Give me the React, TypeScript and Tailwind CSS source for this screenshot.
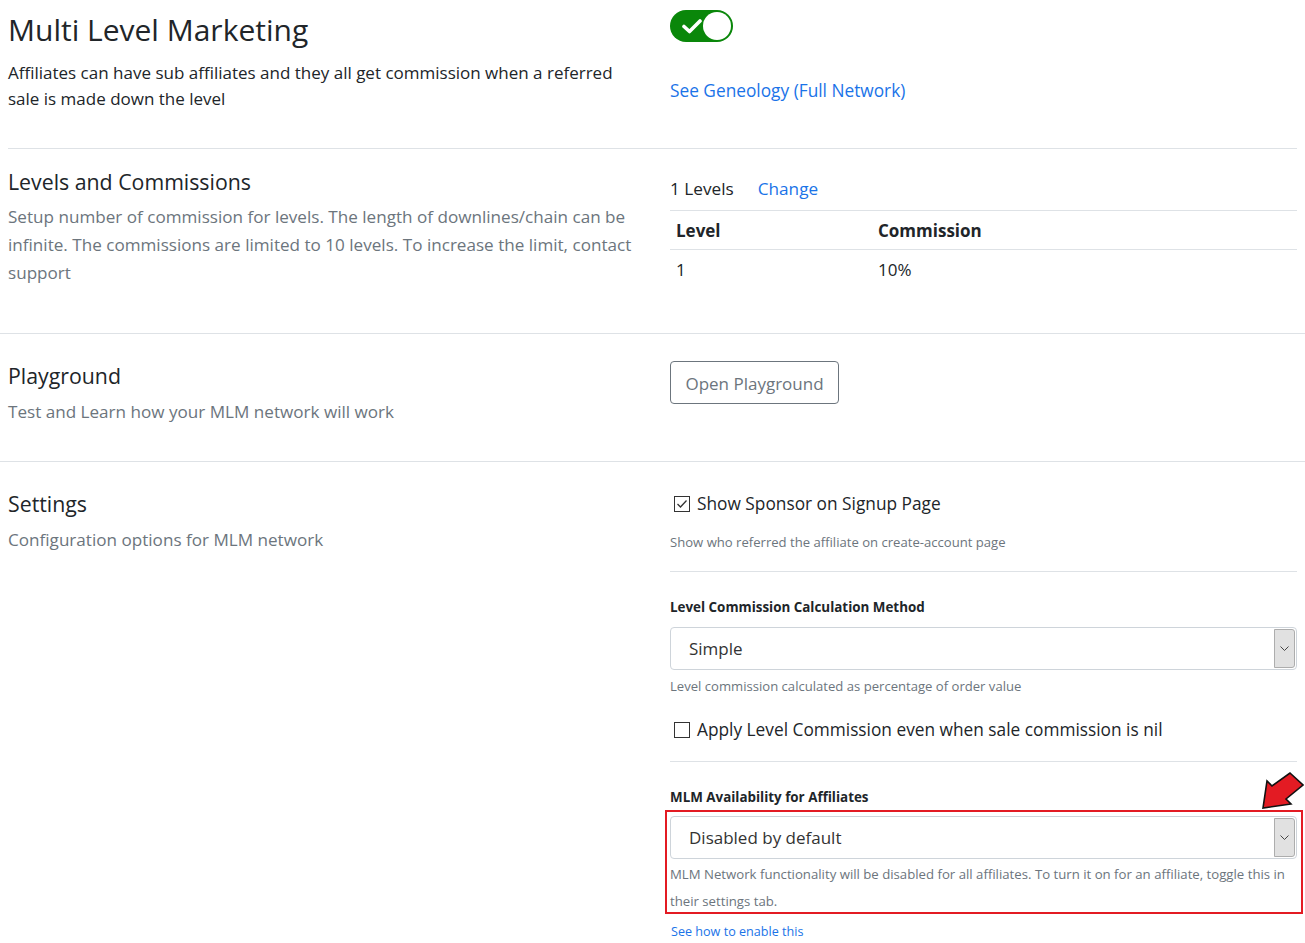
import React from "react";

const Toggle = () => (
    <div className="w-[63px] h-[32px] rounded-full bg-[#0a870a] flex items-center justify-between pl-[12px] pr-[2px]">
        <svg width="20" height="16" viewBox="0 0 20 16">
            <path d="M2 8.5 L7.5 13.5 L18 3" stroke="white" strokeWidth="3.6" fill="none" strokeLinecap="round" strokeLinejoin="round" />
        </svg>
        <div className="w-[28px] h-[28px] rounded-full bg-white" />
    </div>
);

const Checkbox = ({ checked }: { checked?: boolean }) => (
    <div className="w-[16px] h-[16px] border border-[#333] bg-white flex items-center justify-center shrink-0">
        {checked && (
            <svg width="12" height="12" viewBox="0 0 12 12">
                <path d="M1.5 6 L4.5 9 L10.5 2.5" stroke="#333" strokeWidth="1.3" fill="none" />
            </svg>
        )}
    </div>
);

const Select = ({ value }: { value: string }) => (
    <div className="h-[43px] w-full border border-[#ced4da] rounded-[4px] bg-white flex items-center justify-between pl-[18px] pr-[1px]">
        <span className="text-[17px] text-[#333]">{value}</span>
        <div className="w-[21px] h-[39px] bg-[#e1e1e1] border border-[#adadad] rounded-r-[3px] flex items-center justify-center">
            <svg width="9" height="6" viewBox="0 0 9 6">
                <path d="M0.5 0.5 L4.5 4.5 L8.5 0.5" stroke="#444" strokeWidth="1" fill="none" />
            </svg>
        </div>
    </div>
);

export default function App() {
    return (
        <div className="bg-white text-[#212529] font-['Open_Sans',sans-serif] w-[1305px] min-h-[943px] overflow-hidden">
            {/* header */}
            <div className="mx-2 flex border-b border-[#dee2e6] h-[149px] pt-[10px]">
                <div className="w-[662px] pr-[40px]">
                    <h1 className="text-[30px] leading-[40px] font-normal">Multi Level Marketing</h1>
                    <p className="text-[17px] leading-[26px] mt-[10px]">
                        Affiliates can have sub affiliates and they all get commission when a referred sale is made down the level
                    </p>
                </div>
                <div className="flex-1">
                    <Toggle />
                    <a className="block text-[#1a73e8] text-[17.3px] mt-[36px]">See Geneology (Full Network)</a>
                </div>
            </div>

            {/* levels */}
            <div className="border-b border-[#dee2e6] h-[185px]">
                <div className="px-2 flex pt-[19px]">
                    <div className="w-[662px] pr-[14px]">
                        <h3 className="text-[21.3px] leading-[28px]">Levels and Commissions</h3>
                        <p className="text-[17.1px] leading-[28px] text-[#6c757d] mt-[7px]">
                            Setup number of commission for levels. The length of downlines/chain can be infinite. The commissions are limited to 10 levels. To increase the limit, contact support
                        </p>
                    </div>
                    <div className="flex-1 pt-[9px]">
                        <div className="flex items-center gap-[24px] text-[17.2px] h-[24px]">
                            <span>1 Levels</span>
                            <a className="text-[#1a73e8]">Change</a>
                        </div>
                        <table className="w-full mt-[9px] text-[17px] border-collapse">
                            <thead>
                                <tr className="border-t border-b border-[#dee2e6] h-[39px]">
                                    <th className="w-[202px] text-left font-bold pl-[6px] pt-[1px]">Level</th>
                                    <th className="text-left font-bold pl-[6px] pt-[1px]">Commission</th>
                                </tr>
                            </thead>
                            <tbody>
                                <tr className="h-[40px]">
                                    <td className="pl-[6px]">1</td>
                                    <td className="pl-[6px]">10%</td>
                                </tr>
                            </tbody>
                        </table>
                    </div>
                </div>
            </div>

            {/* playground */}
            <div className="border-b border-[#dee2e6] h-[128px]">
                <div className="px-2 flex pt-[27px]">
                    <div className="w-[662px]">
                        <h3 className="text-[21.3px] leading-[28px] mt-[1px]">Playground</h3>
                        <p className="text-[17.1px] leading-[28px] text-[#6c757d] mt-[8px]">Test and Learn how your MLM network will work</p>
                    </div>
                    <div className="flex-1">
                        <button className="h-[43px] w-[169px] border border-[#6c757d] rounded-[4px] text-[17px] text-[#6c757d] bg-white pt-[3px]">
                            Open Playground
                        </button>
                    </div>
                </div>
            </div>

            {/* settings */}
            <div className="px-2 flex pt-[27px]">
                <div className="w-[662px]">
                    <h3 className="text-[21.3px] leading-[28px] mt-[1px]">Settings</h3>
                    <p className="text-[17.1px] leading-[28px] text-[#6c757d] mt-[8px]">Configuration options for MLM network</p>
                </div>
                <div className="flex-1 relative">
                    <div className="border-b border-[#dee2e6] pb-[19px] pt-[1px]">
                        <label className="flex items-center gap-[7px] pl-[4px] h-[28px] text-[17.3px]">
                            <Checkbox checked />
                            <span>Show Sponsor on Signup Page</span>
                        </label>
                        <p className="text-[13.1px] text-[#6c757d] mt-[14px] leading-[20px]">Show who referred the affiliate on create-account page</p>
                    </div>

                    <div className="border-b border-[#dee2e6] pb-[17px] pt-[25px]">
                        <div className="text-[13.4px] font-bold leading-[20px] mb-[10px]">Level Commission Calculation Method</div>
                        <Select value="Simple" />
                        <p className="text-[13.1px] text-[#6c757d] mt-[6px] leading-[20px]">Level commission calculated as percentage of order value</p>
                        <label className="flex items-center gap-[7px] pl-[4px] h-[28px] text-[17.3px] mt-[20px]">
                            <Checkbox />
                            <span>Apply Level Commission even when sale commission is nil</span>
                        </label>
                    </div>

                    <div className="pt-[25px]">
                        <div className="text-[13.4px] font-bold leading-[20px] mb-[3px]">MLM Availability for Affiliates</div>
                        <div className="border-2 border-[#e31b23] -ml-[5px] -mr-[6px] pl-[3px] pr-[4px] pt-[4px] pb-0">
                            <Select value="Disabled by default" />
                            <p className="text-[13.2px] text-[#6c757d] leading-[27px] mt-[2px] -mb-[3px]">
                                MLM Network functionality will be disabled for all affiliates. To turn it on for an affiliate, toggle this in their settings tab.
                            </p>
                        </div>
                        <a className="block text-[12.6px] text-[#1a73e8] mt-[9px] pl-[1px]">See how to enable this</a>
                    </div>

                    <svg className="absolute right-[-7px] top-[283px]" width="44" height="38" viewBox="0 0 44 38">
                        <path d="M30 1 L43 13 L26 27 L31 32 L3 36 L7 9 L12 14 Z" fill="#e31b23" stroke="#111" strokeWidth="1.6" strokeLinejoin="miter" />
                    </svg>
                </div>
            </div>
        </div>
    );
}
